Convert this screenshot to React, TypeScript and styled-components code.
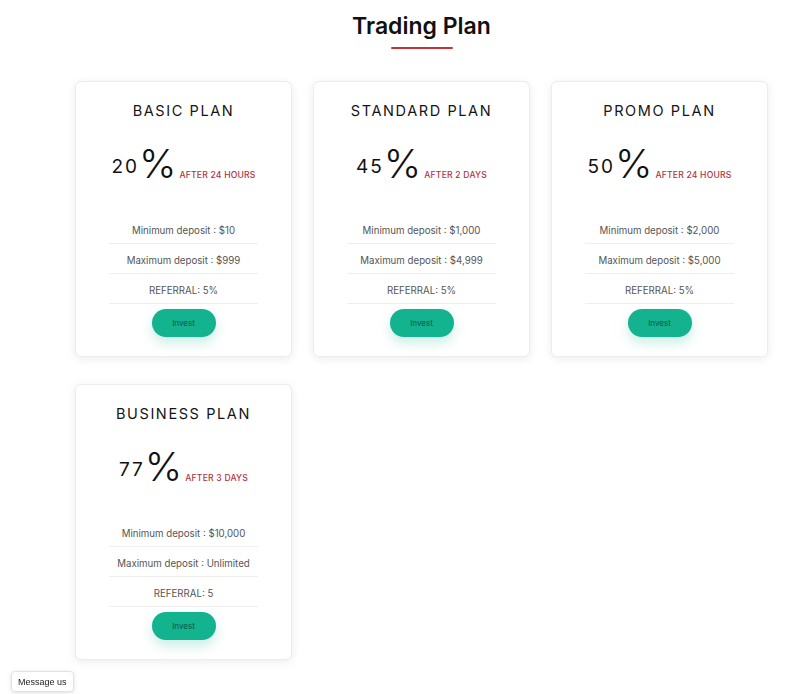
import styled, { createGlobalStyle } from "styled-components";

const plans = [
  { name: "BASIC PLAN", rate: "20", term: "AFTER 24 HOURS", min: "$10", max: "$999", referral: "5%" },
  { name: "STANDARD PLAN", rate: "45", term: "AFTER 2 DAYS", min: "$1,000", max: "$4,999", referral: "5%" },
  { name: "PROMO PLAN", rate: "50", term: "AFTER 24 HOURS", min: "$2,000", max: "$5,000", referral: "5%" },
  { name: "BUSINESS PLAN", rate: "77", term: "AFTER 3 DAYS", min: "$10,000", max: "Unlimited", referral: "5" },
];

const App = () => {
  return (
    <>
      <GlobalStyle />
      <Section>
        <Heading>Trading Plan</Heading>
        <Underline />
        <Grid>
          {plans.map((plan) => (
            <Card key={plan.name}>
              <PlanName>{plan.name}</PlanName>
              <Price>
                <Rate>{plan.rate}</Rate>
                <Percent>%</Percent>
                <Term>{plan.term}</Term>
              </Price>
              <Details>
                <Detail>Minimum deposit : {plan.min}</Detail>
                <Detail>Maximum deposit : {plan.max}</Detail>
                <Detail>REFERRAL: {plan.referral}</Detail>
              </Details>
              <InvestButton>Invest</InvestButton>
            </Card>
          ))}
        </Grid>
      </Section>
      <MessageButton>Message us</MessageButton>
    </>
  );
};

const GlobalStyle = createGlobalStyle`
  body {
    margin: 0;
    background: #fff;
    font-family: Inter, "Noto Sans", sans-serif;
    color: #111;
  }
`;

const Section = styled.div`
  width: 693px;
  margin-left: 75px;
  padding-top: 11px;
  padding-bottom: 36px;
  display: flex;
  flex-direction: column;
  align-items: center;
`;

const Heading = styled.h2`
  margin: 0;
  font-size: 23px;
  line-height: 30px;
  font-weight: 600;
  color: #111;
`;

const Underline = styled.div`
  width: 62px;
  height: 2px;
  border-radius: 2px;
  background: #c43338;
  margin-top: 6px;
`;

const Grid = styled.div`
  align-self: stretch;
  margin-top: 32px;
  display: grid;
  grid-template-columns: repeat(3, 217px);
  align-items: start;
  column-gap: 21px;
  row-gap: 27px;
`;

const Card = styled.div`
  background: #fff;
  border: 1px solid #ececec;
  border-radius: 6px;
  box-shadow: 0 2px 10px rgba(0, 0, 0, 0.08);
  padding: 18px 33px 19px;
  display: flex;
  flex-direction: column;
  align-items: center;
`;

const PlanName = styled.div`
  font-size: 14.5px;
  line-height: 22px;
  letter-spacing: 1.6px;
  font-weight: 400;
  color: #151515;
  white-space: nowrap;
`;

const Price = styled.div`
  margin-top: 18px;
  text-align: center;
  white-space: nowrap;
  line-height: 48px;
  height: 48px;
`;

const Rate = styled.span`
  font-size: 19px;
  letter-spacing: 2px;
  vertical-align: 5px;
  color: #111;
`;

const Percent = styled.span`
  font-size: 40px;
  font-weight: 300;
  color: #111;
`;

const Term = styled.span`
  margin-left: 3px;
  font-size: 8.6px;
  font-weight: 500;
  color: #b2343e;
  letter-spacing: 0.2px;
`;

const Details = styled.ul`
  list-style: none;
  margin: 26px 0 0;
  padding: 0;
  align-self: stretch;
`;

const Detail = styled.li`
  box-sizing: border-box;
  height: 30px;
  padding-top: 4px;
  line-height: 26px;
  border-bottom: 1px solid #eeeeee;
  text-align: center;
  font-size: 9.7px;
  color: #555;
  white-space: nowrap;
`;

const InvestButton = styled.button`
  margin-top: 5px;
  width: 64px;
  height: 28px;
  border: none;
  border-radius: 14px;
  background: #12b38e;
  color: #0b5646;
  font-family: inherit;
  font-size: 8px;
  box-shadow: 0 6px 12px rgba(18, 179, 142, 0.22);
  cursor: pointer;
`;

const MessageButton = styled.button`
  position: fixed;
  left: 11px;
  bottom: 2px;
  height: 21px;
  padding: 0 6px;
  background: #fff;
  border: 1px solid #e2e2e2;
  border-radius: 4px;
  box-shadow: 0 1px 4px rgba(0, 0, 0, 0.12);
  font-family: "Liberation Sans", Arial, sans-serif;
  font-size: 9px;
  color: #222;
  cursor: pointer;
`;

export default App;
